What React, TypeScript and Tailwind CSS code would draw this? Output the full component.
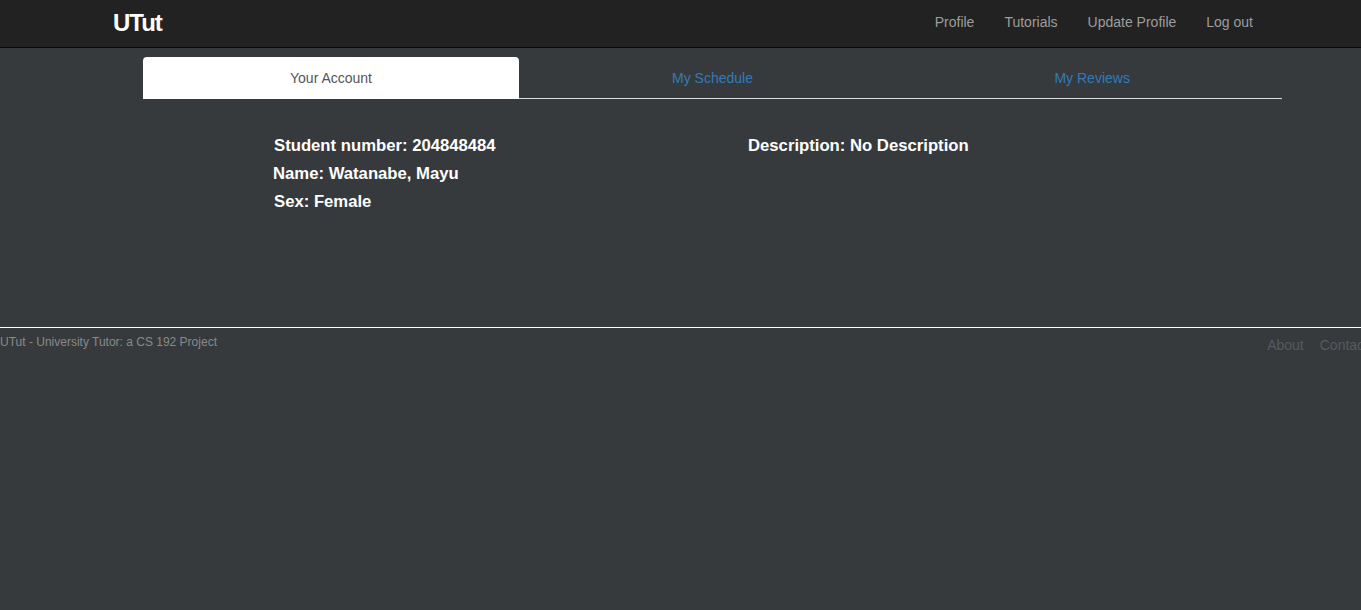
import React from 'react'

const navLinks = ['Profile', 'Tutorials', 'Update Profile', 'Log out']

const tabs = [
  { label: 'Your Account', active: true },
  { label: 'My Schedule', active: false },
  { label: 'My Reviews', active: false },
]

export default function App() {
  return (
    <div
      className="min-h-[610px] bg-[#363a3d] overflow-hidden"
      style={{ fontFamily: '"Liberation Sans", Arial, sans-serif' }}
    >
      {/* navbar */}
      <nav className="h-[48px] bg-[#222222] border-b border-[#080808]">
        <div className="flex h-full items-center pl-[113px] pr-[108px] pb-[2px]">
          <span className="text-white text-[24px] font-bold tracking-[-1px]">UTut</span>
          <ul className="ml-auto flex items-center gap-[30px] text-[14px] text-[#9d9d9d]">
            {navLinks.map((l) => (
              <li key={l}>{l}</li>
            ))}
          </ul>
        </div>
      </nav>

      {/* tabs + content */}
      <div className="ml-[143px] w-[1139px] pt-[9px]">
        <ul className="flex border-b border-[#dddddd] text-[14px]">
          {tabs.map((t) => (
            <li key={t.label} className="w-[380px] mb-[-1px]">
              <div
                className={
                  t.active
                    ? 'h-[42px] leading-[40px] text-center rounded-t-[4px] bg-white text-[#555555] border border-white border-b-transparent w-[376px]'
                    : 'h-[42px] leading-[42px] text-center text-[#337ab7]'
                }
              >
                {t.label}
              </div>
            </li>
          ))}
        </ul>

        <div className="grid grid-cols-[474px_1fr] pl-[131px] pt-[33px] text-[16.7px] font-bold text-white leading-[28px]">
          <div>
            <p>Student number: 204848484</p>
            <p className="-ml-px">Name: Watanabe, Mayu</p>
            <p>Sex: Female</p>
          </div>
          <div>
            <p>Description: No Description</p>
          </div>
        </div>
      </div>

      {/* footer */}
      <footer className="mt-[111px] border-t border-white w-[1385px]">
        <div className="flex items-start">
          <p className="text-[12px] text-[#8a8a8a] pt-[5px]">UTut - University Tutor: a CS 192 Project</p>
          <ul className="ml-auto flex gap-[16px] pr-[17px] pt-[7px] text-[14px] text-[#555b5f]">
            <li>About</li>
            <li>Contact</li>
          </ul>
        </div>
      </footer>
    </div>
  )
}
